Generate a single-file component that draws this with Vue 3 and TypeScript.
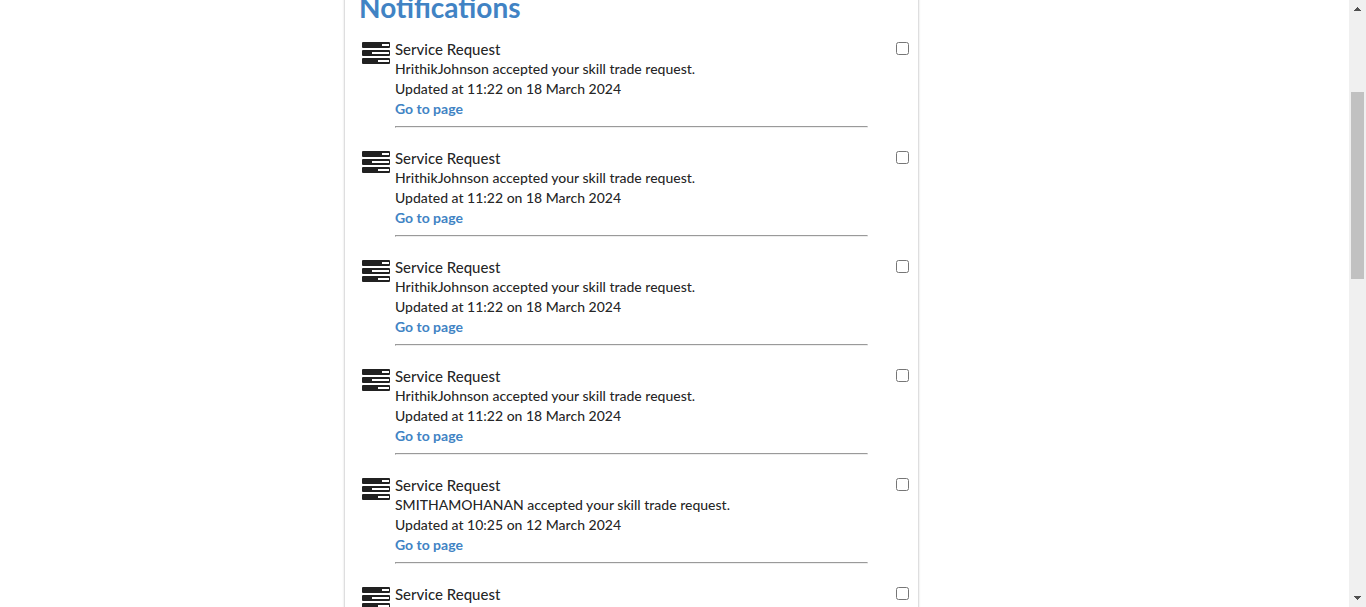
<script setup lang="ts">
interface Notice {
  id: number
  user: string
  time: string
}

const notices: Notice[] = [
  { id: 1, user: 'HrithikJohnson', time: '11:22 on 18 March 2024' },
  { id: 2, user: 'HrithikJohnson', time: '11:22 on 18 March 2024' },
  { id: 3, user: 'HrithikJohnson', time: '11:22 on 18 March 2024' },
  { id: 4, user: 'HrithikJohnson', time: '11:22 on 18 March 2024' },
  { id: 5, user: 'SMITHAMOHANAN', time: '10:25 on 12 March 2024' },
  { id: 6, user: 'SMITHAMOHANAN', time: '10:25 on 12 March 2024' },
]
</script>

<template>
  <div class="viewport">
    <div class="page">
      <main class="card">
        <h1 class="heading">Notifications</h1>
        <ul class="list">
          <li v-for="n in notices" :key="n.id" class="item">
            <svg class="icon" viewBox="0 0 28 22" aria-hidden="true">
              <path
                fill="#212121"
                fill-rule="evenodd"
                d="M1 0H27Q28 0 28 1V5Q28 6 27 6H1Q0 6 0 5V1Q0 0 1 0ZM20 2V4H27V2ZM1 8H27Q28 8 28 9V13Q28 14 27 14H1Q0 14 0 13V9Q0 8 1 8ZM10 10V12H27V10ZM1 16H27Q28 16 28 17V21Q28 22 27 22H1Q0 22 0 21V17Q0 16 1 16ZM16 18V20H27V18Z"
              />
            </svg>
            <div class="body">
              <label class="title" :for="`notice-${n.id}`">Service Request</label>
              <p class="line">{{ n.user }} accepted your skill trade request.</p>
              <p class="line">Updated at {{ n.time }}</p>
              <a class="link" href="#">Go to page</a>
              <hr class="rule" />
            </div>
            <input :id="`notice-${n.id}`" class="check" type="checkbox" />
          </li>
        </ul>
      </main>
    </div>
    <div class="scrollbar" aria-hidden="true">
      <svg class="arrow" viewBox="0 0 17 17" shape-rendering="crispEdges">
        <path fill="#505050" d="M8 7h1v1h1v1h1v1h1v1H5v-1h1V9h1V8h1z" />
      </svg>
      <div class="track"><div class="thumb"></div></div>
      <svg class="arrow" viewBox="0 0 17 17" shape-rendering="crispEdges">
        <path fill="#505050" d="M5 6h7v1h-1v1h-1v1H9v1H8V9H7V8H6V7H5z" />
      </svg>
    </div>
  </div>
</template>

<style>
body {
  margin: 0;
  background: #fff;
}
</style>

<style scoped>
.viewport {
  display: flex;
  height: 100vh;
  overflow: hidden;
  font-family: Lato, "Liberation Sans", sans-serif;
  font-size: 14px;
  font-weight: 500;
  line-height: 20px;
  color: rgba(0, 0, 0, 0.87);
}
.page {
  flex: 1;
  display: grid;
  grid-template-columns: 344fr 575fr 430fr;
  align-items: start;
}
.card {
  grid-column: 2;
  box-sizing: border-box;
  margin-top: -26px;
  padding: 14px 8px 14px 14px;
  border: 1px solid #dededf;
  box-shadow: 0 1px 2px rgba(34, 36, 38, 0.15);
}
.heading {
  margin: 0 0 14px;
  font-size: 28px;
  line-height: 36px;
  font-weight: 700;
  color: #4183c4;
}
.list {
  margin: 0;
  padding: 0;
  list-style: none;
}
.item {
  display: flex;
  align-items: flex-start;
  padding-bottom: 20px;
}
.icon {
  flex: none;
  width: 28px;
  height: 22px;
  margin: 3px 5px 0 3px;
}
.body {
  flex: 1;
  margin-right: 28px;
}
.title {
  display: block;
  font-size: 15px;
}
.line {
  margin: 0;
}
.link {
  display: block;
  width: fit-content;
  font-weight: 700;
  color: #4183c4;
  text-decoration: none;
}
.rule {
  margin: 7px 0 0;
  border: 1px solid;
  border-color: #9a9a9a #eee #eee #9a9a9a;
}
.check {
  flex: none;
  width: 13px;
  height: 13px;
  margin: 3px 1px 0 0;
}
.scrollbar {
  flex: none;
  display: flex;
  flex-direction: column;
  width: 17px;
  background: #f0f0f0;
}
.arrow {
  width: 17px;
  height: 17px;
}
.track {
  flex: 1;
  padding: 0 2px;
  display: grid;
  grid-template-rows: 75fr 187fr 311fr;
}
.thumb {
  grid-row: 2;
  background: #c1c1c1;
}
</style>
